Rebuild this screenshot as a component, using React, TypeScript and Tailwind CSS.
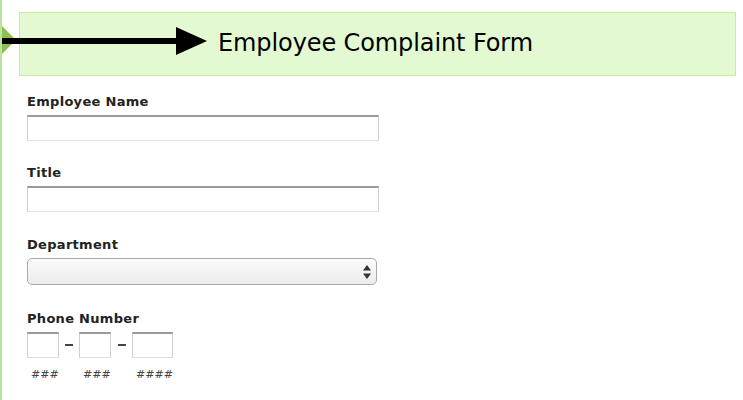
import * as React from "react";

const inputCls =
  "block h-[26px] border border-[#cfcfcf] border-t-2 border-t-[#9a9a9a] border-b-[#e0e0e0] bg-white";

function Field({ label, children, className = "" }: { label: string; children: React.ReactNode; className?: string }) {
  return (
    <div className={className}>
      <label className="block text-[13px] font-bold text-[#222] leading-[16px] tracking-[0.3px] mb-[5px]">{label}</label>
      {children}
    </div>
  );
}

function PhonePart({ width, hint }: { width: string; hint: string }) {
  return (
    <div className="flex flex-col items-start">
      <input className={`${inputCls} ${width}`} />
      <span className="mt-[9px] ml-[4px] text-[11px] italic text-[#444]">{hint}</span>
    </div>
  );
}

export default function App() {
  return (
    <div
      className="relative h-[400px] w-[743px] overflow-hidden bg-white border-l-2 border-[#b9e49a]"
      style={{ fontFamily: '"DejaVu Sans", "Noto Sans", sans-serif' }}
    >
      <header className="ml-[17px] mr-[7px] mt-[12px] h-[64px] flex items-center pl-[198px] bg-[#e3f9d1] border border-[#c3eba3]">
        <h1 className="text-[24px] text-black leading-none tracking-[-0.1px] -mt-[2px]">Employee Complaint Form</h1>
      </header>

      {/* pointer annotation */}
      <svg className="absolute left-[-2px] top-[24px]" width="210" height="34" viewBox="0 0 210 34">
        <polygon points="0,0 16,16 0,32" fill="#8cc152" />
        <rect x="0" y="14" width="180" height="6" fill="#000" />
        <polygon points="176,3 207,17 176,31" fill="#000" />
      </svg>

      <form className="pl-[25px] pt-[18px] flex flex-col gap-[25px]">
        <Field label="Employee Name">
          <input className={`${inputCls} w-[352px]`} />
        </Field>
        <Field label="Title" className="-mt-[1px]">
          <input className={`${inputCls} w-[352px]`} />
        </Field>
        <Field label="Department">
          <div className="relative w-[350px] h-[27px] rounded-[5px] border border-[#aaa] bg-gradient-to-b from-[#fbfbfb] to-[#ececec]">
            <svg className="absolute right-[5px] top-[6px]" width="8" height="14" viewBox="0 0 8 14">
              <polygon points="4,0 8,5.5 0,5.5" fill="#333" />
              <polygon points="0,8.5 8,8.5 4,14" fill="#333" />
            </svg>
          </div>
        </Field>
        <Field label="Phone Number" className="mt-[1px]">
          <div className="flex items-start">
            <PhonePart width="w-[32px]" hint="###" />
            <span className="w-[20px] flex justify-center pt-[12px]">
              <span className="block w-[8px] h-[2px] bg-[#444]" />
            </span>
            <PhonePart width="w-[32px]" hint="###" />
            <span className="w-[21px] flex justify-center pt-[12px]">
              <span className="block w-[8px] h-[2px] bg-[#444]" />
            </span>
            <PhonePart width="w-[41px]" hint="####" />
          </div>
        </Field>
      </form>
    </div>
  );
}
